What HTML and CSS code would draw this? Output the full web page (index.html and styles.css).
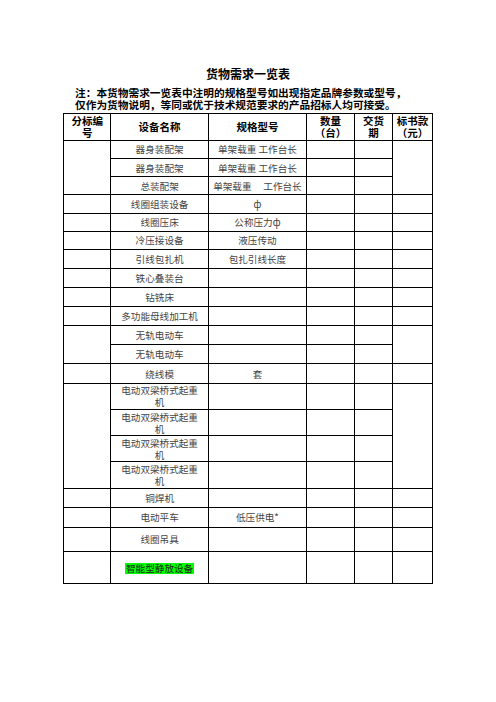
FILE: index.html
```html
<!DOCTYPE html>
<html lang="zh-CN">
<head>
<meta charset="utf-8">
<title>货物需求一览表</title>
<link rel="stylesheet" href="styles.css">
</head>
<body>
<div class="page">
  <h1 class="title">货物需求一览表</h1>
  <p class="note">注：本货物需求一览表中注明的规格型号如出现指定品牌参数或型号，<br>仅作为货物说明，等同或优于技术规范要求的产品招标人均可接受。</p>
  <table class="sheet">
    <colgroup>
      <col class="c1"><col class="c2"><col class="c3"><col class="c4"><col class="c5"><col class="c6">
    </colgroup>
    <thead>
      <tr class="hrow">
        <th>分标编<br>号</th>
        <th>设备名称</th>
        <th>规格型号</th>
        <th>数量<br>（台）</th>
        <th>交货<br>期</th>
        <th>标书款<br>（元）</th>
      </tr>
    </thead>
    <tbody>
      <tr class="r185"><td rowspan="3"></td><td>器身装配架</td><td>单架载重 工作台长</td><td></td><td></td><td rowspan="3"></td></tr>
      <tr class="r18"><td>器身装配架</td><td>单架载重 工作台长</td><td></td><td></td></tr>
      <tr class="r18"><td>总装配架</td><td>单架载重　 工作台长</td><td></td><td></td></tr>
      <tr class="r185"><td></td><td>线圈组装设备</td><td>ф</td><td></td><td></td><td></td></tr>
      <tr class="r183"><td></td><td>线圈压床</td><td>公称压力ф</td><td></td><td></td><td></td></tr>
      <tr class="r184"><td></td><td>冷压接设备</td><td>液压传动</td><td></td><td></td><td></td></tr>
      <tr class="r186"><td></td><td>引线包扎机</td><td>包扎引线长度</td><td></td><td></td><td></td></tr>
      <tr class="r19"><td></td><td>铁心叠装台</td><td></td><td></td><td></td><td></td></tr>
      <tr class="r194"><td></td><td>钻铣床</td><td></td><td></td><td></td><td></td></tr>
      <tr class="r186"><td></td><td>多功能母线加工机</td><td></td><td></td><td></td><td></td></tr>
      <tr class="r197"><td rowspan="2"></td><td>无轨电动车</td><td></td><td></td><td></td><td rowspan="2"></td></tr>
      <tr class="r19"><td>无轨电动车</td><td></td><td></td><td></td></tr>
      <tr class="r193"><td></td><td>绕线模</td><td>套</td><td></td><td></td><td></td></tr>
      <tr class="r26"><td rowspan="4"></td><td class="wrap">电动双梁桥式起重机</td><td></td><td></td><td></td><td rowspan="4"></td></tr>
      <tr class="r267"><td class="wrap">电动双梁桥式起重机</td><td></td><td></td><td></td></tr>
      <tr class="r257"><td class="wrap">电动双梁桥式起重机</td><td></td><td></td><td></td></tr>
      <tr class="r266"><td class="wrap">电动双梁桥式起重机</td><td></td><td></td><td></td></tr>
      <tr class="r19"><td></td><td>铜焊机</td><td></td><td></td><td></td><td></td></tr>
      <tr class="r20"><td></td><td>电动平车</td><td>低压供电*</td><td></td><td></td><td></td></tr>
      <tr class="r244"><td></td><td>线圈吊具</td><td></td><td></td><td></td><td></td></tr>
      <tr class="r323"><td></td><td><span class="mark">智能型静放设备</span></td><td></td><td></td><td></td><td></td></tr>
    </tbody>
  </table>
</div>
</body>
</html>
```

FILE: styles.css
```css
html, body {
  margin: 0;
  padding: 0;
  background: #ffffff;
}

.page {
  width: 496px;
  padding-top: 67px;
  font-family: "Noto Sans CJK SC", "DejaVu Sans", sans-serif;
  color: #000;
}

.title {
  margin: 0;
  font-size: 12px;
  line-height: 14px;
  font-weight: 700;
  text-align: center;
}

.note {
  margin: 6px 0 0 75px;
  font-size: 10.7px;
  line-height: 11.5px;
  font-weight: 700;
  white-space: nowrap;
}

.sheet {
  margin: 2.5px auto 0;
  width: 368.5px;
  table-layout: fixed;
  border-collapse: collapse;
}

.c1 { width: 47px; }
.c2 { width: 97.7px; }
.c3 { width: 98px; }
.c4 { width: 48px; }
.c5 { width: 38.3px; }
.c6 { width: 39.5px; }

.sheet th,
.sheet td {
  border: 1px solid #000;
  padding: 0;
  text-align: center;
  vertical-align: middle;
}

.sheet th {
  font-size: 10.5px;
  line-height: 12px;
  font-weight: 700;
}

.sheet td {
  font-size: 9.6px;
  line-height: 12px;
  color: #444;
  white-space: nowrap;
}

.sheet td.wrap {
  white-space: normal;
  padding: 0 8px;
}

.hrow { height: 27px; }
.r18 { height: 18px; }
.r183 { height: 18.3px; }
.r184 { height: 18.4px; }
.r185 { height: 18.5px; }
.r186 { height: 18.6px; }
.r19 { height: 19px; }
.r193 { height: 19.3px; }
.r194 { height: 19.4px; }
.r197 { height: 19.7px; }
.r20 { height: 20px; }
.r244 { height: 24.4px; }
.r257 { height: 25.7px; }
.r26 { height: 26px; }
.r266 { height: 26.6px; }
.r267 { height: 26.7px; }
.r323 { height: 32.3px; }

.mark {
  display: inline-block;
  background: #00ff00;
  color: #222;
  line-height: 11px;
  padding: 0 1px;
}
```
